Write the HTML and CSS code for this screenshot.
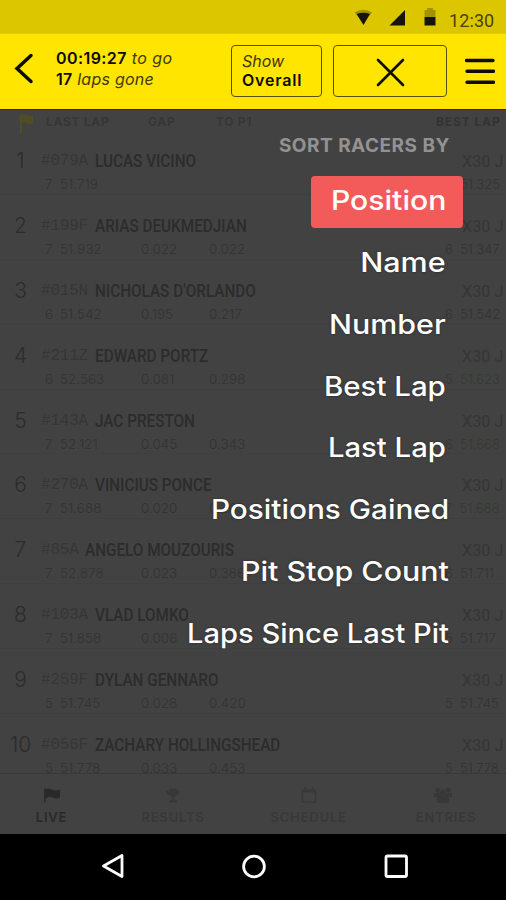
FILE: index.html
```html
<!DOCTYPE html>
<html lang="en">
<head>
<meta charset="utf-8">
<title>Live Timing</title>
<link rel="stylesheet" href="styles.css">
</head>
<body>
<div class="status">
  <svg class="status-icons" width="96" height="34" viewBox="0 0 96 34">
    <path d="M1.500 12.500Q10.500 7 19 12.500L17 15H4Z" fill="#a39300"/><path d="M3.500 14Q10.500 11.500 17 14L10.500 25Z" fill="#16140a"/>
    <path d="M36.500 25.500L52 10V25.500Z" fill="#16140a"/>
    <path d="M71.500 17V10H74V8H80V10H82.500V17Z" fill="#a39300"/><path d="M71.500 17H82.500V25.500H71.500Z" fill="#16140a"/>
  </svg>
  <span class="clock">12:30</span>
</div>
<header class="header">
  <svg class="back" width="20" height="32" viewBox="0 0 20 32"><path d="M17 2.500L3 15.500L17 28.500" fill="none" stroke="#0c0b08" stroke-width="3.500" stroke-linecap="round"/></svg>
  <div class="session"><div class="line1"><b>00:19:27</b> <i>to go</i></div><div class="line2"><b>17</b> <i>laps gone</i></div></div>
  <div class="button show"><i>Show</i><b>Overall</b></div>
  <div class="button close"><svg width="30" height="30" viewBox="0 0 30 30"><path d="M2 2L27 27M27 2L2 27" stroke="#0c0b08" stroke-width="2.600" stroke-linecap="round"/></svg></div>
  <svg class="burger" width="30" height="30" viewBox="0 0 30 30"><path d="M1.500 3.500H28M2 14.200H28.500M2 25.200H28.500" stroke="#0c0b08" stroke-width="3.400" stroke-linecap="round"/></svg>
</header>
<main class="content">
  <section class="board">
    <div class="heads">
      <svg width="16" height="24" viewBox="0 0 16 24"><path d="M1 4Q5 1 9 3T15 3V12Q11 13 8 11T4 12V22H2V12Z" fill="#4e4d23"/></svg>
      <span>LAST LAP</span><span>GAP</span><span>TO P1</span><span class="end">BEST LAP</span>
    </div>
    <div class="row"><span class="pos">1</span><span class="num">#079A</span><span class="name">LUCAS VICINO</span><span class="cls">X30 J</span><div class="times"><span>7</span><span>51.719</span><span></span><span></span><span class="best">6&nbsp; 51.325</span></div></div>
    <div class="row"><span class="pos">2</span><span class="num">#199F</span><span class="name">ARIAS DEUKMEDJIAN</span><span class="cls">X30 J</span><div class="times"><span>7</span><span>51.932</span><span>0.022</span><span>0.022</span><span class="best">6&nbsp; 51.347</span></div></div>
    <div class="row"><span class="pos">3</span><span class="num">#015N</span><span class="name">NICHOLAS D'ORLANDO</span><span class="cls">X30 J</span><div class="times"><span>6</span><span>51.542</span><span>0.195</span><span>0.217</span><span class="best">6&nbsp; 51.542</span></div></div>
    <div class="row"><span class="pos">4</span><span class="num">#211Z</span><span class="name">EDWARD PORTZ</span><span class="cls">X30 J</span><div class="times"><span>6</span><span>52.563</span><span>0.081</span><span>0.298</span><span class="best green">5&nbsp; 51.623</span></div></div>
    <div class="row"><span class="pos">5</span><span class="num">#143A</span><span class="name">JAC PRESTON</span><span class="cls">X30 J</span><div class="times"><span>7</span><span>52.121</span><span>0.045</span><span>0.343</span><span class="best green">6&nbsp; 51.668</span></div></div>
    <div class="row"><span class="pos">6</span><span class="num">#270A</span><span class="name">VINICIUS PONCE</span><span class="cls">X30 J</span><div class="times"><span>7</span><span>51.688</span><span>0.020</span><span>0.363</span><span class="best green">7&nbsp; 51.688</span></div></div>
    <div class="row"><span class="pos">7</span><span class="num short">#85A</span><span class="name">ANGELO MOUZOURIS</span><span class="cls">X30 J</span><div class="times"><span>7</span><span>52.878</span><span>0.023</span><span>0.386</span><span class="best">6&nbsp; 51.711</span></div></div>
    <div class="row"><span class="pos">8</span><span class="num">#103A</span><span class="name">VLAD LOMKO</span><span class="cls">X30 J</span><div class="times"><span>7</span><span>51.858</span><span>0.006</span><span>0.392</span><span class="best">5&nbsp; 51.717</span></div></div>
    <div class="row"><span class="pos">9</span><span class="num">#259F</span><span class="name">DYLAN GENNARO</span><span class="cls">X30 J</span><div class="times"><span>5</span><span>51.745</span><span>0.028</span><span>0.420</span><span class="best">5&nbsp; 51.745</span></div></div>
    <div class="row"><span class="pos">10</span><span class="num">#056F</span><span class="name">ZACHARY HOLLINGSHEAD</span><span class="cls">X30 J</span><div class="times"><span>5</span><span>51.778</span><span>0.033</span><span>0.453</span><span class="best">5&nbsp; 51.778</span></div></div>
  </section>
  <nav class="tabs">
    <div class="tab active"><svg width="18" height="16" viewBox="0 0 18 16"><path d="M1 1H2.500V2Q6 0 9 2T17 2V10Q13 12 9.500 10T2.500 11V15H1Z" fill="currentColor"/></svg><span>LIVE</span></div>
    <div class="tab results"><svg width="18" height="16" viewBox="0 0 18 16"><path d="M5 1H13V3H16Q16 7 12 8Q11 10 10 10V12L13 13V15H5V13L8 12V10Q7 10 6 8Q2 7 2 3H5Z" fill="currentColor"/></svg><span>RESULTS</span></div>
    <div class="tab schedule"><svg width="18" height="18" viewBox="0 0 18 18"><path d="M2 3H16V16H2ZM5 0V4M13 0V4M2 5H16" fill="none" stroke="currentColor" stroke-width="1.500"/></svg><span>SCHEDULE</span></div>
    <div class="tab entries"><svg width="20" height="17" viewBox="0 0 20 17"><g fill="currentColor"><circle cx="4.500" cy="3" r="2.500"/><circle cx="15.500" cy="3" r="2.500"/><circle cx="10" cy="5.500" r="3"/><path d="M1 10V6H7L10 9L13 6H19V10H16V16H4V10Z"/></g></svg><span>ENTRIES</span></div>
  </nav>
  <aside class="menu">
    <h2>SORT RACERS BY</h2>
    <div class="item selected"><span class="w-position">Position</span></div>
    <div class="item"><span class="w-name">Name</span></div>
    <div class="item"><span class="w-number">Number</span></div>
    <div class="item"><span class="w-best">Best Lap</span></div>
    <div class="item"><span class="w-last">Last Lap</span></div>
    <div class="item wide"><span class="w-gained">Positions Gained</span></div>
    <div class="item wide"><span class="w-pit">Pit Stop Count</span></div>
    <div class="item wide"><span class="w-since">Laps Since Last Pit</span></div>
  </aside>
</main>
<footer class="android">
  <svg width="26" height="28" viewBox="0 0 26 28"><path d="M22 3.500V24.500L3.500 14Z" fill="none" stroke="#fff" stroke-width="2.800" stroke-linejoin="round"/></svg>
  <svg width="26" height="28" viewBox="0 0 26 28"><circle cx="13" cy="14.500" r="10.400" fill="none" stroke="#fff" stroke-width="2.800"/></svg>
  <svg width="26" height="28" viewBox="0 0 26 28"><rect x="3" y="4" width="20.500" height="20.500" rx="1.500" fill="none" stroke="#fff" stroke-width="2.800"/></svg>
</footer>
</body>
</html>
```
FILE: styles.css
```css
* { box-sizing: border-box; }
body { margin: 0; width: 506px; height: 900px; overflow: hidden; display: flex; flex-direction: column; background: #000; font-family: Inter, "Liberation Sans", sans-serif; }
svg { display: block; flex: none; }
i, b { white-space: nowrap; }
.status { height: 34px; flex: none; background: #dcc600; display: flex; justify-content: flex-end; padding-right: 10px; border-bottom: 1px solid #e3cd00; }
.clock { width: 47px; font: 18px/41px Roboto, sans-serif; letter-spacing: .1px; color: #4b4300; white-space: nowrap; }
.header { height: 76px; flex: none; background: #ffe500; border-bottom: 1px solid #29292b; display: flex; align-items: flex-start; padding-left: 14px; color: #0c0b08; }
.back { margin: 19px 22px 0 0; }
.session { width: 175px; padding-top: 14px; font-size: 16px; line-height: 21px; white-space: nowrap; }
.session b { font-weight: 600; }
.session i { color: #403900; }
.line1 { letter-spacing: .42px; }
.line2 { letter-spacing: .25px; }
.button { height: 52px; margin-top: 11px; border: 1px solid #574e00; border-radius: 4px; }
.show { width: 91px; padding: 6px 0 0 10px; font-size: 16px; line-height: 19px; display: flex; flex-direction: column; }
.show i { color: #403900; }
.show b { font-weight: 600; letter-spacing: .8px; }
.close { width: 114px; margin-left: 11px; padding: 12px 0 0 42px; }
.burger { margin: 23px 0 0 18px; }
.content { position: relative; height: 724px; flex: none; background: #424242; display: flex; flex-direction: column; }
.board { height: 663px; overflow: hidden; color: #373737; }
.heads { height: 18px; display: grid; grid-template-columns: 28px 102px 68px 1fr 70px; padding-left: 18px; margin-top: 2px; font-size: 12px; line-height: 20px; font-weight: 700; letter-spacing: .7px; color: #363636; white-space: nowrap; }
.heads .end { color: #333; letter-spacing: .9px; }
.row { height: 64.900px; padding-top: 18px; display: grid; grid-template-columns: 41px 54px 1fr 44px; grid-template-rows: 25px 22px; border-bottom: 1px solid #3f3f3f; line-height: 25px; white-space: nowrap; }
.pos { text-align: center; font-size: 21px; font-weight: 300; line-height: 26px; color: #2c2c2c; }
.num { font: 16px/27px "Liberation Mono", monospace; letter-spacing: -.2px; color: #363636; }
.row:has(.short) { grid-template-columns: 41px 44px 1fr 44px; }
.name { font: 500 18px/25px Roboto, sans-serif; color: #2c2c2c; transform: scaleX(.85); transform-origin: left; }
.cls { font: 16px/28px Roboto, sans-serif; letter-spacing: .1px; color: #353535; }
.times { grid-column: 1 / -1; padding-left: 45px; display: grid; grid-template-columns: 15px 81px 68px 1fr 61px; font-size: 13.500px; font-weight: 300; line-height: 22px; color: #323232; }
.best { font-size: 13px; }
.best.green { color: #343a32; }
.tabs { height: 61px; border-top: 1px solid #393939; display: flex; background: #424242; color: #383838; }
.tab { display: flex; flex-direction: column; align-items: center; padding-top: 13px; width: 103px; font-size: 13px; line-height: 18px; font-weight: 600; flex: none; }
.tab svg { height: 17px; margin-bottom: 4px; }
.tab span { letter-spacing: .8px; white-space: nowrap; }
.active { color: #292929; }
.results { width: 140px; }
.schedule { width: 131px; }
.entries { width: 132px; padding-left: 12px; }
.entries svg { margin-right: 6px; }
.menu { position: absolute; top: 22px; right: 43px; width: 290px; display: flex; flex-direction: column; align-items: flex-end; color: #fff; }
.menu h2 { margin: 0 13px 17px 0; font-size: 19px; line-height: 27px; font-weight: 700; letter-spacing: .5px; color: #929292; white-space: nowrap; }
.item { height: 52px; margin-bottom: 9.850px; padding: 0 17px; font-size: 27px; line-height: 49px; font-weight: 500; border-radius: 4px; white-space: nowrap; }
.item span { display: inline-block; transform-origin: right; }
.w-position { transform: scaleX(1.117); }
.w-name { transform: scaleX(1.130); }
.w-number { transform: scaleX(1.126); }
.w-best { transform: scaleX(1.090); }
.w-last { transform: scaleX(1.083); }
.w-gained { transform: scaleX(1.102); }
.w-pit { transform: scaleX(1.125); }
.w-since { transform: scaleX(1.078); }
.selected { width: 152px; background: #f35b5b; text-align: right; }
.item:not(.selected) { text-shadow: 0 0 2px #222; }
.wide { padding-right: 14px; }
.android { flex: 1; display: flex; justify-content: center; gap: 115.500px; padding: 18px 0 0 2px; background: #000; }
```
